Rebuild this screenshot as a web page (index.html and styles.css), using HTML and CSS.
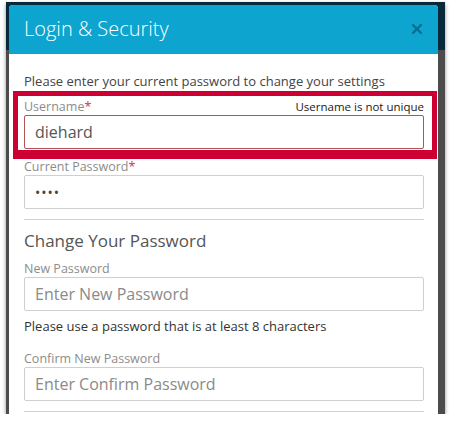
FILE: index.html
```html
<!DOCTYPE html>
<html>
<head>
<meta charset="utf-8">
<link rel="stylesheet" href="styles.css">
</head>
<body>
<div class="frame">
  <div class="modal">
    <div class="modal-header">
      <h1 class="modal-title">Login &amp; Security</h1>
      <button class="close" aria-label="Close">
        <svg width="10" height="10" viewBox="0 0 10 10"><path d="M1 1 L9 9 M9 1 L1 9" stroke="#0a6f92" stroke-width="2.4" stroke-linecap="square"/></svg>
      </button>
    </div>
    <div class="modal-body">
      <p class="intro">Please enter your current password to change your settings</p>
      <div class="error-box">
        <div class="label-row">
          <label class="label">Username<span class="req">*</span></label>
          <span class="error-msg">Username is not unique</span>
        </div>
        <div class="input input-error">diehard</div>
      </div>
      <label class="label">Current Password<span class="req">*</span></label>
      <div class="input dots">••••</div>
      <div class="divider first"></div>
      <h2 class="section-title">Change Your Password</h2>
      <label class="label">New Password</label>
      <div class="input placeholder">Enter New Password</div>
      <p class="hint">Please use a password that is at least 8 characters</p>
      <label class="label">Confirm New Password</label>
      <div class="input placeholder">Enter Confirm Password</div>
      <div class="divider last"></div>
    </div>
  </div>
</div>
</body>
</html>
```
FILE: styles.css
```css
html, body {
  margin: 0;
  padding: 0;
  background: #ffffff;
}
body {
  font-family: "Open Sans", "Liberation Sans", sans-serif;
}
.frame {
  margin: 2px 0 0 6px;
  width: 439px;
  height: 412px;
  overflow: hidden;
  background: linear-gradient(#07293a 0, #07293a 48px, #4b4b4b 48px, #4b4b4b 100%);
  box-shadow: 0 2px 4px rgba(0, 0, 0, 0.45);
  padding: 3px 0 0 3px;
  box-sizing: border-box;
}
.modal {
  width: 429px;
  height: 420px;
  background: #ffffff;
  border-radius: 4px 4px 0 0;
  overflow: hidden;
}
.modal-header {
  height: 49px;
  background: #0ea4d0;
  display: flex;
  align-items: center;
  justify-content: space-between;
  padding: 0 16px 0 15px;
}
.modal-title {
  margin: 0;
  font-size: 20px;
  font-weight: 300;
  color: #ffffff;
  line-height: 28px;
  padding-bottom: 2px;
}
.close {
  background: none;
  border: 0;
  padding: 0;
  width: 10px;
  height: 10px;
  display: flex;
  margin-top: -2px;
}
.modal-body {
  padding: 19px 14px 0 15px;
}
.intro {
  margin: 0;
  font-size: 13px;
  line-height: 17px;
  color: #444;
}
.error-box {
  margin: 1px -13px 0 -11px;
  border: 5px solid #cc0033;
  border-bottom-width: 9px;
  padding: 3px 8px 1px 6px;
}
.label-row {
  display: flex;
  justify-content: space-between;
  align-items: baseline;
}
.label {
  display: block;
  font-size: 12.5px;
  line-height: 16px;
  color: #8c8c8c;
}
.req {
  color: #d0334d;
}
.error-msg {
  font-size: 11.5px;
  line-height: 16px;
  color: #1a1a1a;
}
.input {
  height: 34px;
  box-sizing: border-box;
  border: 1px solid #cfcfcf;
  border-radius: 2px;
  padding: 0 10px;
  display: flex;
  align-items: center;
  font-size: 16px;
  color: #555;
}
.input-error {
  border-color: #b55252;
}
.dots {
  font-size: 14px;
  letter-spacing: 1px;
  color: #444;
}
.placeholder {
  color: #8a8a8a;
}
.divider {
  height: 1px;
  background: #d2d2d2;
}
.divider.first {
  margin: 10px 0 9px;
}
.divider.last {
  margin-top: 10px;
}
.section-title {
  margin: 0 0 9px;
  font-size: 17px;
  font-weight: 400;
  line-height: 23px;
  color: #555;
}
.hint {
  margin: 7px 0 17px;
  font-size: 13px;
  line-height: 16px;
  color: #333;
}
```
